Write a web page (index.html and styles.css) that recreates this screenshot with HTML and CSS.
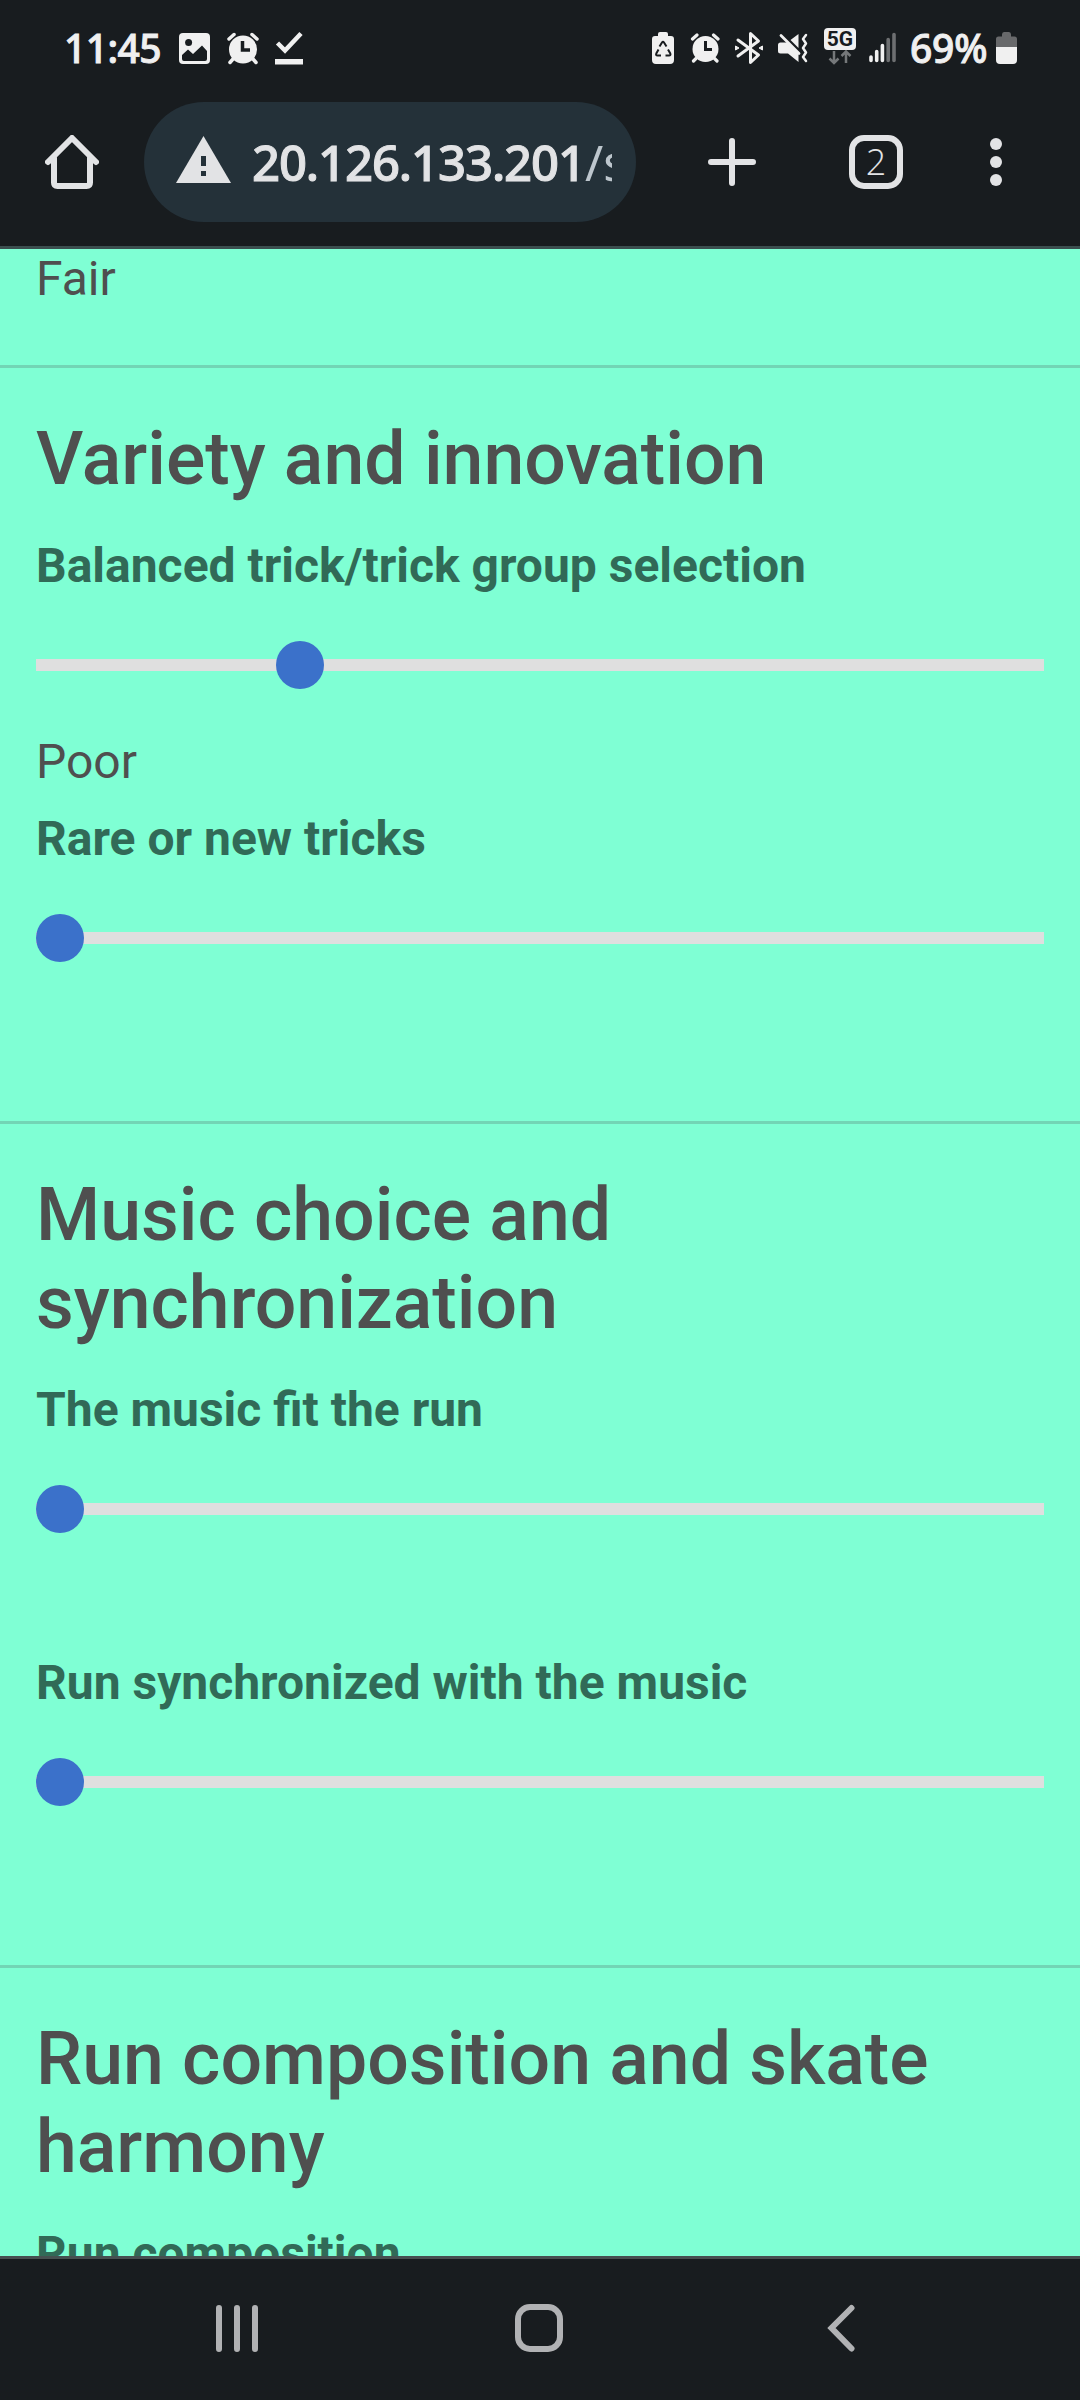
FILE: index.html
```html
<!DOCTYPE html>
<html lang="en">
<head>
<meta charset="utf-8">
<title>Run judging</title>
<link rel="stylesheet" href="styles.css">
</head>
<body>
<div class="phone">
  <header class="browser">
    <div class="status">
      <div class="status-left">
        <span class="clock">11:45</span>
        <svg class="i-picture" width="32" height="40" viewBox="179 28 32 40"><rect x="179" y="33" width="31" height="31" rx="4" fill="#f0f0f0"/><circle cx="188.600" cy="42.500" r="3.500" fill="#181c1f"/><path d="M182 55l6-5.500 5 4.500 9-8.500 5 5.500v8q0 2-2 2h-21q-2 0-2-2z" fill="#181c1f"/></svg>
        <svg class="i-alarm" width="32" height="40" viewBox="227 28 32 40"><circle cx="243" cy="49.500" r="14" fill="#f0f0f0"/><path d="M229 39l5-4.500M257 39l-5-4.500M233 59l-3 3.500M253 59l3 3.500" stroke="#f0f0f0" stroke-width="3.500" stroke-linecap="round"/><path d="M242.500 41v9h7.500" fill="none" stroke="#181c1f" stroke-width="3.500"/></svg>
        <svg class="i-check" width="28" height="40" viewBox="275 28 28 40"><path d="M277.500 43l7.500 7.500 16-17" fill="none" stroke="#f0f0f0" stroke-width="4.500"/><path d="M275 59h28v5.500h-28z" fill="#f0f0f0"/></svg>
      </div>
      <div class="status-right">
        <svg width="22" height="40" viewBox="652 28 22 40"><path d="M658 36v-2q0-2 2-2h6q2 0 2 2v2h3q3 0 3 3v21q0 4-4 4h-14q-4 0-4-4v-21q0-3 3-3z" fill="#f0f0f0"/><path d="M659.500 46.500l2.500-4q1-1.500 2 0l2.500 4M668 49.500l2.300 4q.7 2-1.300 2h-3.500M661 55.500h-3.500q-2 0-1.200-2l2.200-4" fill="none" stroke="#181c1f" stroke-width="2"/></svg>
        <svg class="i-alarm-r" width="30" height="40" viewBox="690 28 30 40"><circle cx="705.500" cy="49" r="13" fill="#f0f0f0"/><path d="M692.500 39l4.500-4M718 39l-4.500-4M696 58.500l-2.500 2.500M714.500 58.500l2.500 2.500" stroke="#f0f0f0" stroke-width="3.200" stroke-linecap="round"/><path d="M705.500 41v8.500h6.500" fill="none" stroke="#181c1f" stroke-width="3"/></svg>
        <svg class="i-bluetooth" width="28" height="40" viewBox="735 28 28 40"><path d="M738 40l20.500 15-8 7.500v-29l8 7.500-20.500 15" fill="none" stroke="#f0f0f0" stroke-width="3" stroke-linecap="round" stroke-linejoin="round"/><path d="M735.500 46l3.500 2-3.500 2zM762.500 46l-3.500 2 3.500 2z" fill="#f0f0f0" stroke="#f0f0f0" stroke-linejoin="round"/></svg>
        <svg class="i-mute" width="30" height="40" viewBox="778 28 30 40"><path d="M778 45q0-2.500 2.500-2.500h7.500l10.500 10.500v9l-10.500-8.500h-7.500q-2.500 0-2.500-2.500zM790.500 40l8-6v14z" fill="#f0f0f0"/><path d="M781 35.500l18 18" stroke="#f0f0f0" stroke-width="2.800" stroke-linecap="round"/><path d="M806 35l-3 4 3 4.500-3 4.500 3 4.500-3 4.500 3 4" fill="none" stroke="#f0f0f0" stroke-width="2.500" stroke-linecap="round" stroke-linejoin="round"/></svg>
        <svg class="i-5g" width="32" height="40" viewBox="824 28 32 40"><rect x="824" y="28" width="32" height="22" rx="4" fill="#f0f0f0"/><text x="840" y="46" text-anchor="middle" class="net">5G</text><path d="M834 51v12M829.500 58.500l4.500 4.500 4.500-4.500M846 63v-11M841.500 56l4.500-4.500 4.500 4.500" fill="none" stroke="#75787a" stroke-width="2.500"/></svg>
        <svg class="i-signal" width="28" height="40" viewBox="869 28 28 40"><path d="M871 57v3.500M876.700 51.500v9M882.400 45.500v15" stroke="#f0f0f0" stroke-width="3.600" stroke-linecap="round"/><path d="M888.200 39.500v21M894 34.500v26" stroke="#6d6f71" stroke-width="3.600" stroke-linecap="round"/></svg>
        <span class="percent">69%</span>
        <svg class="i-battery" width="21" height="40" viewBox="996 28 21 40"><path d="M996 47v-8q0-2.500 2.500-2.500h3.500v-2q0-2.500 2-2.500h5q2 0 2 2.500v2h3.500q2.500 0 2.500 2.500v8z" fill="#68696b"/><path d="M996 47h21v13q0 4-4 4h-13q-4 0-4-4z" fill="#f0f0f0"/></svg>
      </div>
    </div>
    <div class="toolbar">
      <svg class="home" width="54" height="54" viewBox="45 135 54 54"><path d="M48 162l24-24 24 24M54 158v24.500q0 3.500 3.500 3.500h29q3.500 0 3.500-3.500v-24.500" fill="none" stroke="#e2e3e5" stroke-width="6" stroke-linecap="round" stroke-linejoin="round"/></svg>
      <div class="address">
        <svg class="warning" width="55" height="47" viewBox="0 0 55 47"><path d="M27.500 0L55 47H0z" fill="#e2e3e5"/><path d="M25 20h5v10h-5zM25 35h5v5h-5z" fill="#243139"/></svg>
        <div class="url"><span class="host">20.126.133.201</span><span class="path">/s</span></div>
      </div>
      <svg class="plus" width="48" height="48" viewBox="0 0 48 48"><path d="M24 3v42M3 24h42" stroke="#e2e3e5" stroke-width="6" stroke-linecap="round"/></svg>
      <div class="tabs">2</div>
      <svg class="more" width="12" height="48" viewBox="0 0 12 48" fill="#e2e3e5"><circle cx="6" cy="6" r="6"/><circle cx="6" cy="24" r="6"/><circle cx="6" cy="42" r="6"/></svg>
    </div>
  </header>
  <main class="page">
    <section class="group group-first">
      <p class="value">Fair</p>
    </section>
    <section class="group">
      <h2>Variety and innovation</h2>
      <label>Balanced trick/trick group selection</label>
      <div class="range"><span class="thumb" style="margin-left:240px"></span></div>
      <p class="value">Poor</p>
      <label>Rare or new tricks</label>
      <div class="range"><span class="thumb"></span></div>
      <p class="value"></p>
    </section>
    <section class="group">
      <h2>Music choice and synchronization</h2>
      <label>The music fit the run</label>
      <div class="range"><span class="thumb"></span></div>
      <p class="value"></p>
      <label>Run synchronized with the music</label>
      <div class="range"><span class="thumb"></span></div>
      <p class="value"></p>
    </section>
    <section class="group">
      <h2>Run composition and skate harmony</h2>
      <label>Run composition</label>
    </section>
  </main>
  <nav class="navbar">
    <svg width="42" height="48" viewBox="0 0 42 48"><path d="M3 4v41M21 4v41M39 4v41" stroke="#b1b2b4" stroke-width="6" stroke-linecap="round"/></svg>
    <svg class="nav-home" width="48" height="48" viewBox="0 0 48 48"><rect x="3" y="3" width="42" height="42" rx="12" fill="none" stroke="#b1b2b4" stroke-width="6"/></svg>
    <svg class="nav-back" width="28" height="48" viewBox="0 0 28 48"><path d="M24.500 4L4.500 24l20 20.500" fill="none" stroke="#b1b2b4" stroke-width="6" stroke-linecap="round"/></svg>
  </nav>
</div>
</body>
</html>
```
FILE: styles.css
```css
* { box-sizing: border-box; }
body { margin: 0; font-family: Roboto, sans-serif; }
svg { display: block; flex: none; }
.phone {
  width: 1080px;
  height: 2400px;
  display: flex;
  flex-direction: column;
  overflow: hidden;
  background: #181c1f;
}
.browser {
  flex: none;
  height: 249px;
  border-bottom: 3px solid #3b4f4f;
  font-family: "Noto Sans", sans-serif;
}
.status {
  height: 102px;
  padding: 28px 63px 0 64px;
  display: flex;
  justify-content: space-between;
  color: #f0f0f0;
}
.status-left, .status-right { display: flex; height: 40px; }
.clock, .percent {
  font-size: 39px;
  font-weight: 500;
  line-height: 40px;
  white-space: nowrap;
  -webkit-text-stroke: 0.9px #f0f0f0;
}
.clock { width: 115px; letter-spacing: -0.6px; }
.percent { width: 85px; margin-left: 13px; letter-spacing: -0.2px; }
.i-alarm { margin-left: 16px; }
.i-check { margin-left: 16px; }
.i-alarm-r { margin-left: 16px; }
.i-bluetooth { margin-left: 15px; }
.i-mute { margin-left: 15px; }
.i-5g { margin-left: 16px; }
.i-signal { margin-left: 13px; }
.i-battery { margin-left: 1px; }
.net { font: 700 21px Roboto, sans-serif; fill: #181c1f; }
.toolbar {
  height: 120px;
  padding-left: 45px;
  display: flex;
  align-items: center;
}
.address {
  width: 492px;
  height: 120px;
  margin-left: 45px;
  padding-left: 32px;
  border-radius: 60px;
  background: #243139;
  display: flex;
  align-items: center;
}
.warning { margin-bottom: 5px; }
.url {
  width: 361px;
  margin-left: 20px;
  padding-left: 1px;
  overflow: hidden;
  white-space: nowrap;
  font-size: 49px;
  line-height: 68px;
  color: #e2e3e5;
}
.host {
  font-weight: 500;
  letter-spacing: -1.1px;
  -webkit-text-stroke: 1px #e2e3e5;
}
.path { color: #bdc6cd; }
.plus { margin-left: 72px; }
.tabs {
  width: 54px;
  height: 54px;
  margin-left: 93px;
  border: 6px solid #e2e3e5;
  border-radius: 15px;
  color: #e2e3e5;
  font-family: "Open Sans", sans-serif;
  font-size: 36px;
  font-weight: 300;
  line-height: 42px;
  text-align: center;
}
.more { margin-left: 87px; }
.page {
  flex: 1;
  min-height: 0;
  overflow: hidden;
  background: #7fffd4;
  color: #4f4f4f;
}
.group {
  padding: 47px 36px 48px;
  border-bottom: 3px solid #72d5b5;
}
.group-first { padding-top: 0; margin-top: -9px; }
h2 {
  margin: 0 0 24px;
  font-size: 73.4px;
  font-weight: 500;
  line-height: 88px;
}
label {
  display: block;
  font-size: 48px;
  font-weight: 700;
  line-height: 77px;
  color: #316a57;
}
.value {
  height: 77px;
  margin: 0;
  font-size: 48px;
  line-height: 77px;
}
.range {
  height: 119px;
  padding-top: 37px;
  background: linear-gradient(#dfdfdf, #dfdfdf) 0 55px / 100% 12px no-repeat;
}
.thumb {
  display: block;
  width: 48px;
  height: 48px;
  border-radius: 50%;
  background: #3b71ca;
}
.navbar {
  flex: none;
  height: 144px;
  border-top: 3px solid #465050;
  padding: 45px 0 0 216px;
  display: flex;
}
.nav-home { margin-left: 257px; }
.nav-back { margin-left: 264px; }
```
